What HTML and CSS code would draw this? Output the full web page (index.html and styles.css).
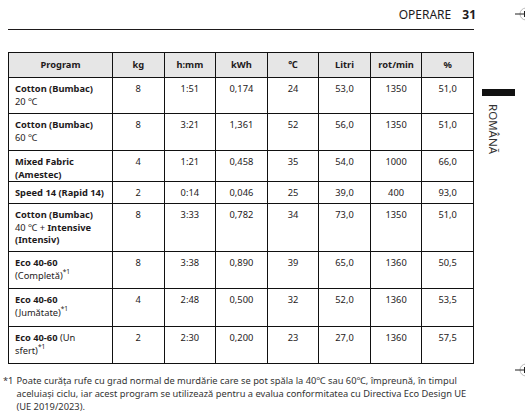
FILE: index.html
```html
<!DOCTYPE html>
<html lang="ro">
  <head>
    <meta charset="UTF-8" />
    <meta name="viewport" content="width=device-width, initial-scale=1.0" />
    <title>Operare 31</title>
    <link rel="stylesheet" href="styles.css">
  </head>
  <body>
    <div class="page">
      <header class="running-head">
        <span class="section">OPERARE</span>
        <span class="page-no">31</span>
      </header>

      <div class="content">
        <div class="main">
          <table class="programs">
            <colgroup>
              <col class="col-name">
              <col><col><col><col><col><col><col>
            </colgroup>
            <thead>
              <tr>
                <th>Program</th>
                <th>kg</th>
                <th>h:mm</th>
                <th>kWh</th>
                <th>℃</th>
                <th>Litri</th>
                <th>rot/min</th>
                <th>%</th>
              </tr>
            </thead>
            <tbody>
              <tr class="h36">
                <td class="name"><b>Cotton (Bumbac)</b><br>20 ℃</td>
                <td>8</td><td>1:51</td><td>0,174</td><td>24</td><td>53,0</td><td>1350</td><td>51,0</td>
              </tr>
              <tr class="h37">
                <td class="name"><b>Cotton (Bumbac)</b><br>60 ℃</td>
                <td>8</td><td>3:21</td><td>1,361</td><td>52</td><td>56,0</td><td>1350</td><td>51,0</td>
              </tr>
              <tr class="h31">
                <td class="name"><b>Mixed Fabric<br>(Amestec)</b></td>
                <td>4</td><td>1:21</td><td>0,458</td><td>35</td><td>54,0</td><td>1000</td><td>66,0</td>
              </tr>
              <tr class="h22">
                <td class="name"><b>Speed 14 (Rapid 14)</b></td>
                <td>2</td><td>0:14</td><td>0,046</td><td>25</td><td>39,0</td><td>400</td><td>93,0</td>
              </tr>
              <tr class="h48">
                <td class="name"><b>Cotton (Bumbac)</b><br>40 ℃ + <b>Intensive<br>(Intensiv)</b></td>
                <td>8</td><td>3:33</td><td>0,782</td><td>34</td><td>73,0</td><td>1350</td><td>51,0</td>
              </tr>
              <tr class="h37">
                <td class="name"><b>Eco 40-60</b><br>(Completă)<sup>*1</sup></td>
                <td>8</td><td>3:38</td><td>0,890</td><td>39</td><td>65,0</td><td>1360</td><td>50,5</td>
              </tr>
              <tr class="h38">
                <td class="name"><b>Eco 40-60</b><br>(Jumătate)<sup>*1</sup></td>
                <td>4</td><td>2:48</td><td>0,500</td><td>32</td><td>52,0</td><td>1360</td><td>53,5</td>
              </tr>
              <tr class="h37">
                <td class="name"><b>Eco 40-60</b> (Un<br>sfert)<sup>*1</sup></td>
                <td>2</td><td>2:30</td><td>0,200</td><td>23</td><td>27,0</td><td>1360</td><td>57,5</td>
              </tr>
            </tbody>
          </table>

          <p class="footnote">
            <span class="mark">*1</span>
            <span class="note">Poate curăța rufe cu grad normal de murdărie care se pot spăla la 40℃ sau 60℃, împreună, în timpul<br>aceluiași ciclu, iar acest program se utilizează pentru a evalua conformitatea cu Directiva Eco Design UE<br>(UE 2019/2023).</span>
          </p>
        </div>

        <aside class="lang-tab">
          <div class="tab-bar"></div>
          <span class="tab-label">ROMÂNĂ</span>
        </aside>
      </div>

      <!-- printer registration marks at the trimmed edge -->
      <svg class="reg reg-top" width="14" height="16" viewBox="0 0 14 16">
        <circle cx="14" cy="8" r="6" fill="none" stroke="#bbb" stroke-width="1" />
        <line x1="3" y1="8" x2="14" y2="8" stroke="#222" stroke-width="1" />
        <line x1="12.5" y1="5" x2="12.5" y2="11" stroke="#222" stroke-width="1" />
      </svg>
      <svg class="reg reg-bottom" width="14" height="16" viewBox="0 0 14 16">
        <circle cx="14" cy="8" r="6" fill="none" stroke="#bbb" stroke-width="1" />
        <line x1="3" y1="8" x2="14" y2="8" stroke="#222" stroke-width="1" />
        <line x1="12.5" y1="5" x2="12.5" y2="11" stroke="#222" stroke-width="1" />
      </svg>
    </div>
  </body>
</html>
```

FILE: styles.css
```css
* {
  margin: 0;
  padding: 0;
  box-sizing: border-box;
}
body {
  font-family: "Noto Sans", "Open Sans", "DejaVu Sans", sans-serif;
  color: #1e1a1b;
  background: #fff;
}
.page {
  position: relative;
  height: 416px;
  padding-left: 8px;
  overflow: hidden;
}
.running-head {
  width: 466px;
  height: 30px;
  display: flex;
  justify-content: flex-end;
  align-items: baseline;
  gap: 11px;
  padding-top: 7px;
  border-bottom: 1px solid #1e1a1b;
  font-size: 12px;
  line-height: 16px;
}
.page-no {
  margin-right: -2px;
  font-weight: 700;
}
.content {
  display: flex;
  margin-top: 22px;
}
.main {
  width: 466px;
}
.programs {
  width: 466px;
  border-collapse: collapse;
  table-layout: fixed;
  font-size: 9.3px;
  line-height: 12.5px;
}
.col-name {
  width: 104px;
}
.programs th,
.programs td {
  border: 1px solid #111;
  text-align: center;
}
.programs th {
  height: 25px;
  background: #e6e6e6;
  font-weight: 700;
  vertical-align: middle;
}
.programs td {
  padding: 5px 5px 0;
  vertical-align: top;
}
.programs td.name {
  padding-left: 6px;
  text-align: left;
}
.name b {
  font-weight: 700;
}
.name sup {
  font-size: 6.5px;
  line-height: 0;
  vertical-align: 5px;
}
.h22 { height: 22px; }
.h31 { height: 31px; }
.h36 { height: 36px; }
.h37 { height: 37px; }
.h38 { height: 38px; }
.h48 { height: 48px; }

.footnote {
  display: flex;
  gap: 3px;
  margin: 10px 0 0 -5px;
  width: 475px;
  font-size: 9.3px;
  line-height: 13px;
  color: #333;
}
.footnote .mark {
  flex: none;
}
.lang-tab {
  width: 33px;
  margin-left: 8px;
  padding-top: 37px;
  display: flex;
  flex-direction: column;
  align-items: flex-start;
}
.tab-bar {
  align-self: stretch;
  height: 7px;
  background: #111;
}
.tab-label {
  writing-mode: vertical-rl;
  margin: 8px 0 0 4px;
  font-size: 11.5px;
  line-height: 14px;
  color: #333;
}
.reg {
  position: absolute;
  left: 512px;
}
.reg-top {
  top: 6px;
}
.reg-bottom {
  top: 362px;
}
```
